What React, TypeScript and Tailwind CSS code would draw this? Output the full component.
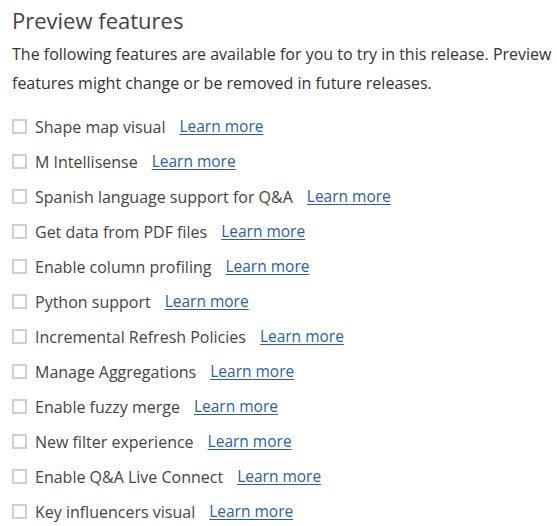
const features = [
  'Shape map visual',
  'M Intellisense',
  'Spanish language support for Q&A',
  'Get data from PDF files',
  'Enable column profiling',
  'Python support',
  'Incremental Refresh Policies',
  'Manage Aggregations',
  'Enable fuzzy merge',
  'New filter experience',
  'Enable Q&A Live Connect',
  'Key influencers visual',
];

const FeatureRow = ({ label }: { label: string }) => (
  <label className="flex items-center h-[35px]">
    <span className="w-[15px] h-[15px] border-2 border-[#d0d0d0] bg-white mr-[8px] shrink-0" />
    <span className="text-[16px] text-[#444]">{label}</span>
    <a href="#" className="ml-[14px] text-[15.5px] text-[#2a5db0] underline underline-offset-2">
      Learn more
    </a>
  </label>
);

export default function App() {
  return (
    <div
      className="w-[557px] h-[526px] bg-white overflow-hidden pl-[12px] pt-[2px]"
      style={{ fontFamily: '"Open Sans", sans-serif' }}
    >
      <h1 className="text-[22px] text-[#444] leading-[36px]">Preview features</h1>
      <p className="text-[16px] text-[#333] leading-[29px] mt-[2px] pr-[4px]">
        The following features are available for you to try in this release. Preview features might
        change or be removed in future releases.
      </p>
      <div className="mt-[11px] flex flex-col">
        {features.map((f, i) => (
          <FeatureRow key={`feature-${i}`} label={f} />
        ))}
      </div>
    </div>
  );
}
